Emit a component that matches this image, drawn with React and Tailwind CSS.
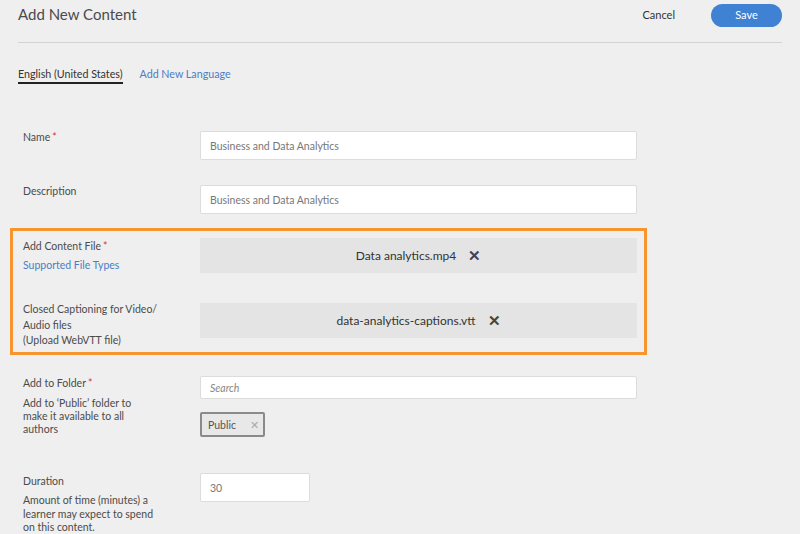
import React from 'react';

const FONT = { fontFamily: 'Lato, "Open Sans", sans-serif' };

function Req() {
  return <span className="text-[#d7373f] ml-[2px]">*</span>;
}

function FileBox({ name }) {
  return (
    <div className="w-[437px] h-[35px] bg-[#e4e4e4] flex items-center justify-center gap-[12px] text-[12px] text-[#333]">
      <span>{name}</span>
      <span className="text-[15px] font-bold text-[#444] leading-none">✕</span>
    </div>
  );
}

function TextInput({ value, w = 'w-[437px]', h = 'h-[29px]', extra = '' }) {
  return (
    <div className={`${w} ${h} bg-white border border-[#dcdcdc] rounded-[2px] flex items-center px-[9px] text-[#777] ${extra}`}>
      {value}
    </div>
  );
}

export default function App() {
  return (
    <div className="w-[800px] h-[534px] overflow-hidden bg-[#efefef] text-[#4b4b4b]" style={FONT}>
      {/* header */}
      <div className="mx-[18px] h-[43px] border-b border-[#d3d3d3] flex items-start justify-between">
        <h1 className="text-[15px] text-[#4b4b4b] mt-[3px]">Add New Content</h1>
        <div className="flex items-center mt-[4px]">
          <button className="text-[11px] text-[#333] mr-[36px]">Cancel</button>
          <button className="w-[71px] h-[23px] rounded-full bg-[#3f81d2] text-white text-[11px]">Save</button>
        </div>
      </div>

      {/* tabs */}
      <div className="mx-[18px] mt-[23px] flex items-end gap-[17px] text-[10.7px] leading-[16px]">
        <div className="border-b-2 border-[#222] text-[#333]">English (United States)</div>
        <div className="pb-[2px] text-[#4a7dc6]">Add New Language</div>
      </div>

      {/* form */}
      <div className="text-[10.5px] leading-[16px] text-[#4b4b4b]">
        <div className="flex h-[29px] mt-[47px] ml-[23px]">
          <div className="w-[177px] mt-[-2px]">Name<Req /></div>
          <TextInput value="Business and Data Analytics" />
        </div>
        <div className="flex h-[29px] mt-[25px] ml-[23px]">
          <div className="w-[177px] mt-[-2px]">Description</div>
          <TextInput value="Business and Data Analytics" />
        </div>

        {/* highlighted */}
        <div className="ml-[10px] mt-[14px] w-[637px] h-[127px] border-[3px] border-[#f7962f] pl-[10px] pt-[7px]">
          <div className="flex h-[35px]">
            <div className="w-[177px] mt-[-1px] leading-[19px]">
              <div>Add Content File<Req /></div>
              <div className="text-[#4a7dc6]">Supported File Types</div>
            </div>
            <FileBox name="Data analytics.mp4" />
          </div>
          <div className="flex h-[35px] mt-[30px]">
            <div className="w-[177px] leading-[15.5px] mt-[-1px]">
              <div>Closed Captioning for Video/</div>
              <div>Audio files</div>
              <div>(Upload WebVTT file)</div>
            </div>
            <FileBox name="data-analytics-captions.vtt" />
          </div>
        </div>

        <div className="flex mt-[21px] ml-[23px]">
          <div className="w-[177px] mt-[-1px]">
            <div>Add to Folder<Req /></div>
            <div className="mt-[6px] leading-[13px]">
              Add to ‘Public’ folder to<br />make it available to all<br />authors
            </div>
          </div>
          <div>
            <TextInput value="Search" h="h-[23px]" extra="italic text-[#888]" />
            <div className="mt-[13px] w-[65px] h-[25px] border-2 border-[#8a8a8a] rounded-[2px] bg-[#e8e8e8] flex items-center pl-[6px] gap-[14px] text-[#555]">
              <span>Public</span>
              <span className="text-[#aaa] text-[11px]">✕</span>
            </div>
          </div>
        </div>

        <div className="flex mt-[36px] ml-[23px]">
          <div className="w-[177px]">
            <div>Duration</div>
            <div className="mt-[5px] leading-[13.5px]">
              Amount of time (minutes) a<br />learner may expect to spend<br />on this content.
            </div>
          </div>
          <TextInput value="30" w="w-[110px]" />
        </div>
      </div>
    </div>
  );
}
